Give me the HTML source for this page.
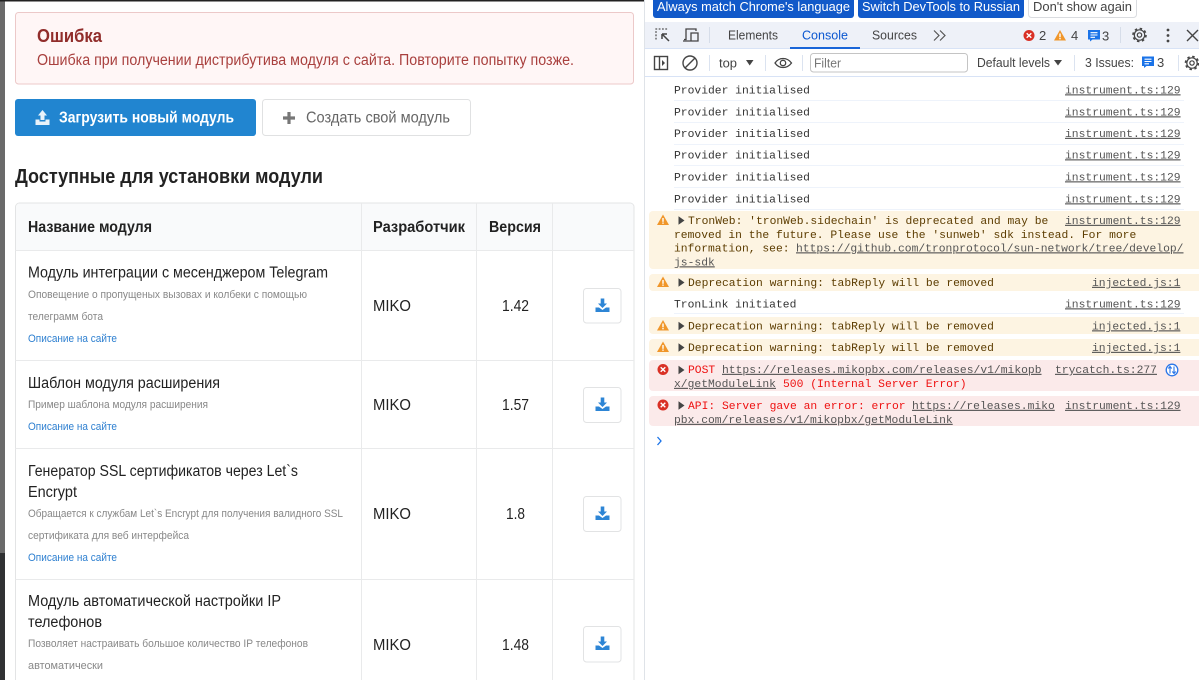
<!DOCTYPE html>
<html><head><meta charset="utf-8"><style>
html,body{margin:0;padding:0;width:1199px;height:680px;overflow:hidden;background:#fff}
svg{display:block}
.s{font-family:"Liberation Sans",sans-serif}
.m{font-family:"Liberation Mono",monospace;font-size:11.33px;fill:#333;transform:translateY(-.7px)}
.l{text-decoration:underline;fill:#555}
.w{fill:#5c3c00}
.r{fill:#e11}
.t{font-size:15.500px;fill:#222}
.d{font-size:10.800px;fill:#888}
.a{font-size:11.300px;fill:#2d7fd0}
.c{font-size:15.500px;fill:#222}
.h{font-size:15.500px;font-weight:bold;fill:#222}
.b{font-size:13px;fill:#fff}
.g{font-size:13px;fill:#444}
</style></head><body>
<svg width="1199" height="680" viewBox="0 0 1199 680" xmlns="http://www.w3.org/2000/svg">
<defs>
<g id="dl"><path d="M-1.800-7.500H1.800V-2.500H4.500L0 2L-4.500-2.500H-1.800Z" fill="#2d85d5"/><path d="M-7 1.500H-3.500L0 4L3.500 1.500H7V6H-7Z" fill="#2d85d5"/></g>
<g id="wi"><path d="M0-5.500L6 5H-6Z" fill="#f0962a"/><rect x="-.7" y="-2" width="1.400" height="3.800" fill="#fff"/><rect x="-.7" y="2.500" width="1.400" height="1.300" fill="#fff"/></g>
<g id="ei"><circle r="5.500" fill="#d93025"/><path d="M-2.300-2.300L2.300 2.300M2.300-2.300L-2.300 2.300" stroke="#fff" stroke-width="1.400"/></g>
<g id="ms"><path d="M-6-5.500H6V4H-1.500L-4 6V4H-6Z" fill="#1a73e8"/><path d="M-3.500-2.800H3.500M-3.500-.5H3.500M-3.500 1.800H1" stroke="#fff" stroke-width="1.100"/></g>
<g id="gr"><circle r="5.200" fill="none" stroke="#444" stroke-width="1.200"/><circle r="6.500" fill="none" stroke="#444" stroke-width="1.600" stroke-dasharray="2.500 2.600"/><circle r="2.200" fill="none" stroke="#444" stroke-width="1.200"/></g>
<path id="ar" d="M0-4.200L6 0L0 4.200Z" fill="#444"/>
</defs>

<!-- left edge -->
<rect x="0" y="0" width="645" height="680" fill="#fff"/>
<rect x="0" y="0" width="5" height="553" fill="#6a6a6a"/>
<rect x="0" y="553" width="5" height="127" fill="#303133"/>
<rect x="0" y="0" width="645" height="1.500" fill="#222"/>

<!-- alert -->
<rect x="15.500" y="12.500" width="618" height="71.500" rx="3" fill="#fff6f6" stroke="#ecc9c9"/>
<text class="s" x="37" y="42" font-size="18.500" font-weight="bold" fill="#912d2b" textLength="65" lengthAdjust="spacingAndGlyphs">Ошибка</text>
<text class="s" x="37" y="65" font-size="15.500" fill="#a9403e" textLength="537" lengthAdjust="spacingAndGlyphs">Ошибка при получении дистрибутива модуля с сайта. Повторите попытку позже.</text>

<!-- buttons -->
<rect x="15" y="99" width="241" height="37" rx="3" fill="#2185d0"/>
<path d="M42.500 110L47 115.500H44.500V120H40.500V115.500H38Z" fill="#e8f2fa"/>
<path d="M35.500 119.500H39.500V121.500H45.500V119.500H49.500V125H35.500Z" fill="#e8f2fa"/>
<text class="s" x="59" y="122.500" font-size="15.500" font-weight="bold" fill="#fff" textLength="175" lengthAdjust="spacingAndGlyphs">Загрузить новый модуль</text>
<rect x="262.500" y="99.500" width="208" height="36" rx="3" fill="#fff" stroke="#e0e1e2"/>
<path d="M283 118H295M289 112V124" stroke="#777" stroke-width="3.200" fill="none"/>
<text class="s" x="306" y="122.500" font-size="15.500" fill="#666" textLength="144" lengthAdjust="spacingAndGlyphs">Создать свой модуль</text>

<text class="s" x="15" y="183" font-size="20" font-weight="bold" fill="#222" textLength="308" lengthAdjust="spacingAndGlyphs">Доступные для установки модули</text>

<!-- table -->
<path d="M15.500 690V207a4 4 0 0 1 4-4H630a4 4 0 0 1 4 4V690" fill="#fff" stroke="#e3e4e5"/>
<path d="M16 250V207a3.500 3.500 0 0 1 3.500-3.500H630a3.500 3.500 0 0 1 3.500 3.500V250Z" fill="#f9fafb"/>
<path d="M15.500 250.500H634M15.500 360.500H634M15.500 448.500H634M15.500 579.500H634M361.500 203V680M476.500 203V680M552.500 203V680" stroke="#e9eaeb" fill="none"/>

<text class="s h" x="28" y="232" textLength="124" lengthAdjust="spacingAndGlyphs">Название модуля</text>
<text class="s h" x="373" y="232" textLength="92" lengthAdjust="spacingAndGlyphs">Разработчик</text>
<text class="s h" x="489" y="232" textLength="52" lengthAdjust="spacingAndGlyphs">Версия</text>

<text class="s t" x="28" y="277.500" textLength="300" lengthAdjust="spacingAndGlyphs">Модуль интеграции с месенджером Telegram</text>
<text class="s d" x="28" y="298" textLength="279" lengthAdjust="spacingAndGlyphs">Оповещение о пропущеных вызовах и колбеки с помощью</text>
<text class="s d" x="28" y="320" textLength="75" lengthAdjust="spacingAndGlyphs">телеграмм бота</text>
<text class="s a" x="28" y="342" textLength="89" lengthAdjust="spacingAndGlyphs">Описание на сайте</text>
<text class="s c" x="373" y="311" textLength="38" lengthAdjust="spacingAndGlyphs">MIKO</text>
<text class="s c" x="502" y="311" textLength="27" lengthAdjust="spacingAndGlyphs">1.42</text>
<rect x="583.500" y="288.500" width="37.500" height="34.500" rx="3" fill="#fff" stroke="#e2e3e4"/>
<use href="#dl" x="602.500" y="306"/>

<text class="s t" x="28" y="388" textLength="192" lengthAdjust="spacingAndGlyphs">Шаблон модуля расширения</text>
<text class="s d" x="28" y="408" textLength="180" lengthAdjust="spacingAndGlyphs">Пример шаблона модуля расширения</text>
<text class="s a" x="28" y="430" textLength="89" lengthAdjust="spacingAndGlyphs">Описание на сайте</text>
<text class="s c" x="373" y="410" textLength="38" lengthAdjust="spacingAndGlyphs">MIKO</text>
<text class="s c" x="502" y="410" textLength="27" lengthAdjust="spacingAndGlyphs">1.57</text>
<rect x="583.500" y="387.500" width="37.500" height="35" rx="3" fill="#fff" stroke="#e2e3e4"/>
<use href="#dl" x="602.500" y="405"/>

<text class="s t" x="28" y="476" textLength="270" lengthAdjust="spacingAndGlyphs">Генератор SSL сертификатов через Let`s</text>
<text class="s t" x="28" y="497" textLength="49" lengthAdjust="spacingAndGlyphs">Encrypt</text>
<text class="s d" x="28" y="517" textLength="315" lengthAdjust="spacingAndGlyphs">Обращается к службам Let`s Encrypt для получения валидного SSL</text>
<text class="s d" x="28" y="539" textLength="161" lengthAdjust="spacingAndGlyphs">сертификата для веб интерфейса</text>
<text class="s a" x="28" y="561" textLength="89" lengthAdjust="spacingAndGlyphs">Описание на сайте</text>
<text class="s c" x="373" y="519" textLength="38" lengthAdjust="spacingAndGlyphs">MIKO</text>
<text class="s c" x="506" y="519" textLength="19" lengthAdjust="spacingAndGlyphs">1.8</text>
<rect x="583.500" y="496.500" width="37.500" height="35" rx="3" fill="#fff" stroke="#e2e3e4"/>
<use href="#dl" x="602.500" y="514"/>

<text class="s t" x="28" y="606" textLength="253" lengthAdjust="spacingAndGlyphs">Модуль автоматической настройки IP</text>
<text class="s t" x="28" y="627" textLength="74" lengthAdjust="spacingAndGlyphs">телефонов</text>
<text class="s d" x="28" y="647" textLength="280" lengthAdjust="spacingAndGlyphs">Позволяет настраивать большое количество IP телефонов</text>
<text class="s d" x="28" y="669" textLength="75" lengthAdjust="spacingAndGlyphs">автоматически</text>
<text class="s c" x="373" y="650" textLength="38" lengthAdjust="spacingAndGlyphs">MIKO</text>
<text class="s c" x="502" y="650" textLength="27" lengthAdjust="spacingAndGlyphs">1.48</text>
<rect x="583.500" y="626.500" width="37.500" height="35.500" rx="3" fill="#fff" stroke="#e2e3e4"/>
<use href="#dl" x="602.500" y="644"/>

<!-- devtools -->
<rect x="644" y="0" width="555" height="680" fill="#fff"/>
<path d="M644.500 0V680" stroke="#dfe3e8"/>
<rect x="653" y="-4" width="201" height="22" rx="3" fill="#1159c9"/>
<text class="s b" x="657" y="11" textLength="193" lengthAdjust="spacingAndGlyphs">Always match Chrome's language</text>
<rect x="858" y="-4" width="166" height="22" rx="3" fill="#1159c9"/>
<text class="s b" x="862" y="11" textLength="158" lengthAdjust="spacingAndGlyphs">Switch DevTools to Russian</text>
<rect x="1028.500" y="-4" width="108" height="21.500" rx="3" fill="#fff" stroke="#dadce0"/>
<text class="s g" x="1033" y="11" textLength="99" lengthAdjust="spacingAndGlyphs" fill="#555">Don't show again</text>

<rect x="645" y="22" width="554" height="26" fill="#eef1f8"/>
<path d="M645 48.500H1199M645 76.500H1199" stroke="#d8e3f6"/>
<rect x="790" y="47" width="70" height="2" fill="#1a66d8"/>

<path d="M656 39.500V29h12" fill="none" stroke="#555" stroke-width="1.300" stroke-dasharray="1.800 1.500"/>
<path d="M662 34L669 41M662 34H667M662 34V39" fill="none" stroke="#444" stroke-width="1.500"/>
<path d="M684 39.500H686V29H696V31M691 33H698V41H691Z M683 41H691" fill="none" stroke="#444" stroke-width="1.300"/>
<path d="M709.500 27V43" stroke="#d6dde9"/>
<text class="s g" x="728" y="39.500" textLength="50" lengthAdjust="spacingAndGlyphs">Elements</text>
<text class="s" x="802" y="39.500" font-size="13" fill="#0b57d0" textLength="46" lengthAdjust="spacingAndGlyphs">Console</text>
<text class="s g" x="872" y="39.500" textLength="45" lengthAdjust="spacingAndGlyphs">Sources</text>
<path d="M934 30.500L939 35.500L934 40.500M940 30.500L945 35.500L940 40.500" fill="none" stroke="#555" stroke-width="1.200"/>

<use href="#ei" x="1029" y="35.500"/>
<text class="s g" x="1039" y="40">2</text>
<use href="#wi" x="1060" y="35.500"/>
<text class="s g" x="1071" y="40">4</text>
<use href="#ms" x="1094" y="35.500"/>
<text class="s g" x="1102" y="40.500">3</text>
<path d="M1120.500 27V43" stroke="#d6dde9"/>
<use href="#gr" x="1139.500" y="35"/>
<circle cx="1168" cy="30" r="1.400" fill="#444"/><circle cx="1168" cy="35.500" r="1.400" fill="#444"/><circle cx="1168" cy="41" r="1.400" fill="#444"/>
<path d="M1187 30L1198 41M1198 30L1187 41" stroke="#444" stroke-width="1.400"/>

<rect x="654.500" y="56.500" width="13" height="13" fill="none" stroke="#444" stroke-width="1.400"/>
<path d="M659.500 56.500V69.500" stroke="#444" stroke-width="1.400"/>
<path d="M662 60L665 63L662 66Z" fill="#444"/>
<circle cx="690" cy="63" r="7" fill="none" stroke="#444" stroke-width="1.400"/>
<path d="M685 68L695 58" stroke="#444" stroke-width="1.400"/>
<path d="M709.500 55V71M765.500 55V71M802.500 55V71M1074.500 55V71M1178.500 55V71" stroke="#dbe3f0"/>
<text class="s g" x="719" y="67.500" textLength="18" lengthAdjust="spacingAndGlyphs">top</text>
<path d="M746 60H753.500L749.700 65.500Z" fill="#444"/>
<path d="M775 63C779 57 787 57 791.500 63C787 69 779 69 775 63Z" fill="none" stroke="#444" stroke-width="1.300"/>
<circle cx="783" cy="63" r="2.700" fill="none" stroke="#444" stroke-width="1.300"/>
<rect x="810.500" y="53.500" width="157" height="18.500" rx="3" fill="#fff" stroke="#c4c4c4"/>
<text class="s" x="814" y="67.500" font-size="13" fill="#777" textLength="27" lengthAdjust="spacingAndGlyphs">Filter</text>
<text class="s g" x="977" y="67" textLength="73" lengthAdjust="spacingAndGlyphs">Default levels</text>
<path d="M1054 60H1062L1058 65.500Z" fill="#444"/>
<text class="s g" x="1085" y="67" textLength="49" lengthAdjust="spacingAndGlyphs">3 Issues:</text>
<use href="#ms" x="1148" y="62"/>
<text class="s g" x="1157" y="67">3</text>
<use href="#gr" x="1192" y="63"/>

<!-- console rows -->
<path d="M674 100.500H1184M674 122.500H1184M674 144.500H1184M674 165.500H1184M674 187.500H1184M674 209.500H1184M674 313.500H1184" stroke="#eef3fb"/>
<g>
<text class="m" x="674" y="94">Provider initialised</text><text class="m l" x="1065" y="94">instrument.ts:129</text>
<text class="m" x="674" y="116">Provider initialised</text><text class="m l" x="1065" y="116">instrument.ts:129</text>
<text class="m" x="674" y="137.500">Provider initialised</text><text class="m l" x="1065" y="137.500">instrument.ts:129</text>
<text class="m" x="674" y="159">Provider initialised</text><text class="m l" x="1065" y="159">instrument.ts:129</text>
<text class="m" x="674" y="181">Provider initialised</text><text class="m l" x="1065" y="181">instrument.ts:129</text>
<text class="m" x="674" y="203">Provider initialised</text><text class="m l" x="1065" y="203">instrument.ts:129</text>
</g>

<rect x="649" y="211" width="560" height="58" rx="4" fill="#fdf4e2"/>
<use href="#wi" x="663" y="220"/><use href="#ar" x="678.500" y="220.500"/>
<text class="m w" x="688" y="224.500">TronWeb: 'tronWeb.sidechain' is deprecated and may be</text>
<text class="m l" x="1065" y="224.500">instrument.ts:129</text>
<text class="m w" x="674" y="238.500">removed in the future. Please use the 'sunweb' sdk instead. For more</text>
<text class="m w" x="674" y="252">information, see:</text>
<text class="m l" x="796" y="252">https://github.com/tronprotocol/sun-network/tree/develop/</text>
<text class="m l" x="674" y="266">js-sdk</text>

<rect x="649" y="274" width="560" height="17" rx="4" fill="#fdf4e2"/>
<use href="#wi" x="663" y="282"/><use href="#ar" x="678.500" y="282.500"/>
<text class="m w" x="688" y="286.500">Deprecation warning: tabReply will be removed</text>
<text class="m l" x="1092" y="286.500">injected.js:1</text>

<text class="m" x="674" y="308">TronLink initiated</text>
<text class="m l" x="1065" y="308">instrument.ts:129</text>

<rect x="649" y="317" width="560" height="17" rx="4" fill="#fdf4e2"/>
<use href="#wi" x="663" y="325.500"/><use href="#ar" x="678.500" y="326"/>
<text class="m w" x="688" y="330">Deprecation warning: tabReply will be removed</text>
<text class="m l" x="1092" y="330">injected.js:1</text>

<rect x="649" y="339" width="560" height="17" rx="4" fill="#fdf4e2"/>
<use href="#wi" x="663" y="347"/><use href="#ar" x="678.500" y="347.500"/>
<text class="m w" x="688" y="351.500">Deprecation warning: tabReply will be removed</text>
<text class="m l" x="1092" y="351.500">injected.js:1</text>

<rect x="649" y="360" width="560" height="31" rx="4" fill="#fbeaea"/>
<use href="#ei" x="663" y="369.500"/><use href="#ar" x="678.500" y="370"/>
<text class="m r" x="688" y="373.500">POST</text>
<text class="m l" x="722" y="373.500">https://releases.mikopbx.com/releases/v1/mikopb</text>
<text class="m l" x="1055" y="373.500">trycatch.ts:277</text>
<circle cx="1172" cy="370" r="5.800" fill="#fff" stroke="#2a76e8" stroke-width="1.300"/>
<path d="M1170 373.500V367M1168.300 368.500L1170 366.500L1171.700 368.500M1174 366.500V373M1172.300 371.500L1174 373.500L1175.700 371.500" fill="none" stroke="#2a76e8" stroke-width="1.100"/>
<text class="m l" x="674" y="387.500">x/getModuleLink</text>
<text class="m r" x="783" y="387.500">500 (Internal Server Error)</text>

<rect x="649" y="396" width="560" height="30" rx="4" fill="#fbeaea"/>
<use href="#ei" x="663" y="405"/><use href="#ar" x="678.500" y="405.500"/>
<text class="m r" x="688" y="409.500">API: Server gave an error: error</text>
<text class="m l" x="912" y="409.500">https://releases.miko</text>
<text class="m l" x="1065" y="409.500">instrument.ts:129</text>
<text class="m l" x="674" y="423.500">pbx.com/releases/v1/mikopbx/getModuleLink</text>

<path d="M657.500 437L661 441L657.500 445" fill="none" stroke="#1a73e8" stroke-width="1.300"/>
</svg>
</body></html>
